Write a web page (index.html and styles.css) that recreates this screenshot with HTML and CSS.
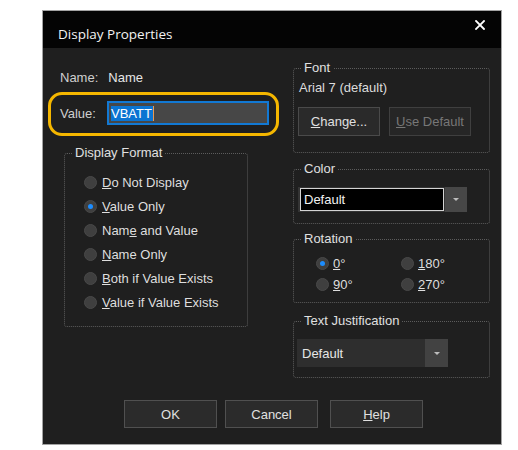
FILE: index.html
```html
<!DOCTYPE html>
<html>
<head>
<meta charset="utf-8">
<title>Display Properties</title>
<link rel="stylesheet" href="styles.css">
</head>
<body>
<div class="dialog">
  <div class="titlebar">
    <span class="title">Display Properties</span>
    <svg class="close" width="10" height="10" viewBox="0 0 10 10"><path d="M1 1L9 9M9 1L1 9" stroke="#ffffff" stroke-width="1.8" stroke-linecap="square"/></svg>
  </div>
  <div class="content">
    <div class="columns">
      <div class="col-left">
        <div class="name-row"><span class="lbl">Name:</span><span class="val">Name</span></div>
        <div class="highlight">
          <span class="value-lbl">Value:</span>
          <div class="input"><span class="sel">VBATT</span><span class="caret"></span></div>
        </div>
        <fieldset class="format">
          <legend>Display Format</legend>
          <div class="gbody format-body">
            <div class="radio"><span class="dot"></span><span class="txt"><u>D</u>o Not Display</span></div>
            <div class="radio"><span class="dot on"></span><span class="txt"><u>V</u>alue Only</span></div>
            <div class="radio"><span class="dot"></span><span class="txt">Nam<u>e</u> and Value</span></div>
            <div class="radio"><span class="dot"></span><span class="txt"><u>N</u>ame Only</span></div>
            <div class="radio"><span class="dot"></span><span class="txt"><u>B</u>oth if Value Exists</span></div>
            <div class="radio"><span class="dot"></span><span class="txt"><u>V</u>alue if Value Exists</span></div>
          </div>
        </fieldset>
      </div>
      <div class="col-right">
        <fieldset class="font">
          <legend>Font</legend>
          <div class="gbody font-body">
            <div class="font-name">Arial 7 (default)</div>
            <div class="btn-row">
              <div class="btn small"><span><u>C</u>hange...</span></div>
              <div class="btn small disabled"><span><u>U</u>se Default</span></div>
            </div>
          </div>
        </fieldset>
        <fieldset class="color">
          <legend>Color</legend>
          <div class="gbody color-body">
            <div class="combo-color">
              <div class="cc-frame"><div class="cc-box">Default</div></div>
              <div class="cc-arrow"><span class="tri"></span></div>
            </div>
          </div>
        </fieldset>
        <fieldset class="rotation">
          <legend>Rotation</legend>
          <div class="gbody rot-grid">
            <div class="radio rot"><span class="dot on"></span><span class="txt"><u>0</u>°</span></div>
            <div class="radio rot"><span class="dot"></span><span class="txt"><u>1</u>80°</span></div>
            <div class="radio rot"><span class="dot"></span><span class="txt"><u>9</u>0°</span></div>
            <div class="radio rot"><span class="dot"></span><span class="txt"><u>2</u>70°</span></div>
          </div>
        </fieldset>
        <fieldset class="justify">
          <legend>Text Justification</legend>
          <div class="gbody justify-body">
            <div class="combo-just">
              <div class="cj-box">Default</div>
              <div class="cj-arrow"><span class="tri"></span></div>
            </div>
          </div>
        </fieldset>
      </div>
    </div>
    <div class="buttons">
      <div class="btn big">OK</div>
      <div class="btn big cancel">Cancel</div>
      <div class="btn big help"><span><u>H</u>elp</span></div>
    </div>
  </div>
</div>
</body>
</html>
```

FILE: styles.css
```css
body {
  margin: 0;
  background: #ffffff;
  font-family: "Liberation Sans", Arial, sans-serif;
  font-size: 13px;
  color: #dcdcdc;
}

.dialog {
  margin: 10px 0 0 42px;
  width: 460px;
  height: 435px;
  box-sizing: border-box;
  border: 1px solid #a3a3a3;
  background: #1f1f1f;
  display: flex;
  flex-direction: column;
}

.titlebar {
  height: 37px;
  flex-shrink: 0;
  background: #040404;
  display: flex;
  justify-content: space-between;
  align-items: flex-start;
  padding: 0 16px 0 15px;
}

.title {
  font-family: "Open Sans", "Noto Sans", sans-serif;
  font-size: 13.5px;
  line-height: 20px;
  margin-top: 13px;
  color: #f2f2f2;
}

.close {
  margin-top: 9px;
}

.content {
  flex: 1;
  padding-top: 12px;
  display: flex;
  flex-direction: column;
}

.columns {
  display: flex;
}

.col-left {
  width: 250px;
  display: flex;
  flex-direction: column;
  align-items: flex-start;
}

.col-right {
  width: 197px;
  display: flex;
  flex-direction: column;
}

.name-row {
  margin-top: 10px;
  margin-left: 17px;
  line-height: 16px;
  color: #cfcfcf;
}

.name-row .val {
  margin-left: 10px;
  color: #e6e6e6;
}

.highlight {
  margin-top: 6px;
  margin-left: 5px;
  width: 231px;
  height: 44px;
  box-sizing: border-box;
  border: 3px solid #f5b700;
  border-radius: 14px;
  display: flex;
  align-items: center;
  padding: 0 0 2px 9px;
}

.value-lbl {
  width: 47px;
  color: #cfcfcf;
}

.input {
  width: 162px;
  height: 24px;
  box-sizing: border-box;
  border: 2px solid #1279d4;
  background: #474747;
  display: flex;
  align-items: center;
  padding-left: 2px;
}

.sel {
  background: #0a74d2;
  color: #ffffff;
  line-height: 15px;
  padding-right: 1px;
}

.caret {
  width: 1px;
  height: 15px;
  background: #e89a52;
}

fieldset {
  margin: 0;
  padding: 0;
  border: 1px dotted #5c5c5c;
  border-radius: 3px;
  min-width: 0;
  box-sizing: border-box;
}

legend {
  margin-left: 7px;
  padding: 0 3px;
  line-height: 16px;
  color: #e0e0e0;
}

.format {
  margin-top: 9px;
  margin-left: 21px;
  width: 184px;
}

.format-body {
  padding: 9px 0 12px 19px;
}

.radio {
  display: flex;
  align-items: center;
  height: 24px;
  color: #dedede;
}

.dot {
  width: 13px;
  height: 13px;
  flex-shrink: 0;
  box-sizing: border-box;
  border-radius: 50%;
  background: #3f3f3f;
  border: 1px solid #494949;
  display: flex;
  align-items: center;
  justify-content: center;
}

.dot.on::after {
  content: "";
  width: 5px;
  height: 5px;
  border-radius: 50%;
  background: #1c8dff;
}

.radio .txt {
  margin-left: 5px;
}

.font-body {
  padding: 4px 0 16px 5px;
}

.font-name {
  line-height: 16px;
  color: #dcdcdc;
}

.btn-row {
  display: flex;
  gap: 9px;
  margin-top: 11px;
  margin-left: -1px;
}

.btn {
  box-sizing: border-box;
  background: #2a2a2a;
  border: 1px solid #4a4a4a;
  color: #e0e0e0;
  display: flex;
  align-items: center;
  justify-content: center;
}

.btn.small {
  width: 82px;
  height: 29px;
}

.btn.disabled {
  color: #777777;
  border-color: #3f3f3f;
  background: #262626;
}

.color {
  margin-top: 8px;
}

.color-body {
  padding: 10px 0 11px 4px;
}

.combo-color {
  display: flex;
  height: 25px;
}

.cc-frame {
  width: 147px;
  box-sizing: border-box;
  background: #343434;
  padding: 1px 1px 1px 2px;
}

.cc-box {
  height: 100%;
  box-sizing: border-box;
  background: #000000;
  border: 1px solid #d4d4d4;
  color: #f2f2f2;
  display: flex;
  align-items: center;
  padding-left: 3px;
}

.cc-arrow {
  width: 22px;
  background: #474747;
  display: flex;
  align-items: center;
  justify-content: center;
}

.tri {
  width: 0;
  height: 0;
  border-left: 3px solid transparent;
  border-right: 3px solid transparent;
  border-top: 3px solid #bdbdbd;
}

.rotation {
  margin-top: 7px;
}

.rot-grid {
  display: grid;
  grid-template-columns: 85px 85px;
  grid-auto-rows: 21px;
  padding: 6px 0 7px 22px;
}

.radio.rot {
  height: 21px;
}

.radio.rot .txt {
  margin-left: 4px;
}

.justify {
  margin-top: 10px;
}

.justify-body {
  padding: 10px 0 10px 3px;
}

.combo-just {
  display: flex;
  width: 151px;
  height: 28px;
  background: #2e2e2e;
}

.cj-box {
  flex: 1;
  display: flex;
  align-items: center;
  padding-left: 5px;
  color: #e6e6e6;
}

.cj-arrow {
  width: 23px;
  background: #424242;
  display: flex;
  align-items: center;
  justify-content: center;
}

.buttons {
  display: flex;
  margin-top: 22px;
  padding-left: 81px;
}

.btn.big {
  width: 93px;
  height: 28px;
  background: #2b2b2b;
  border-color: #505050;
}

.btn.cancel {
  margin-left: 8px;
}

.btn.help {
  margin-left: 12px;
}
```
